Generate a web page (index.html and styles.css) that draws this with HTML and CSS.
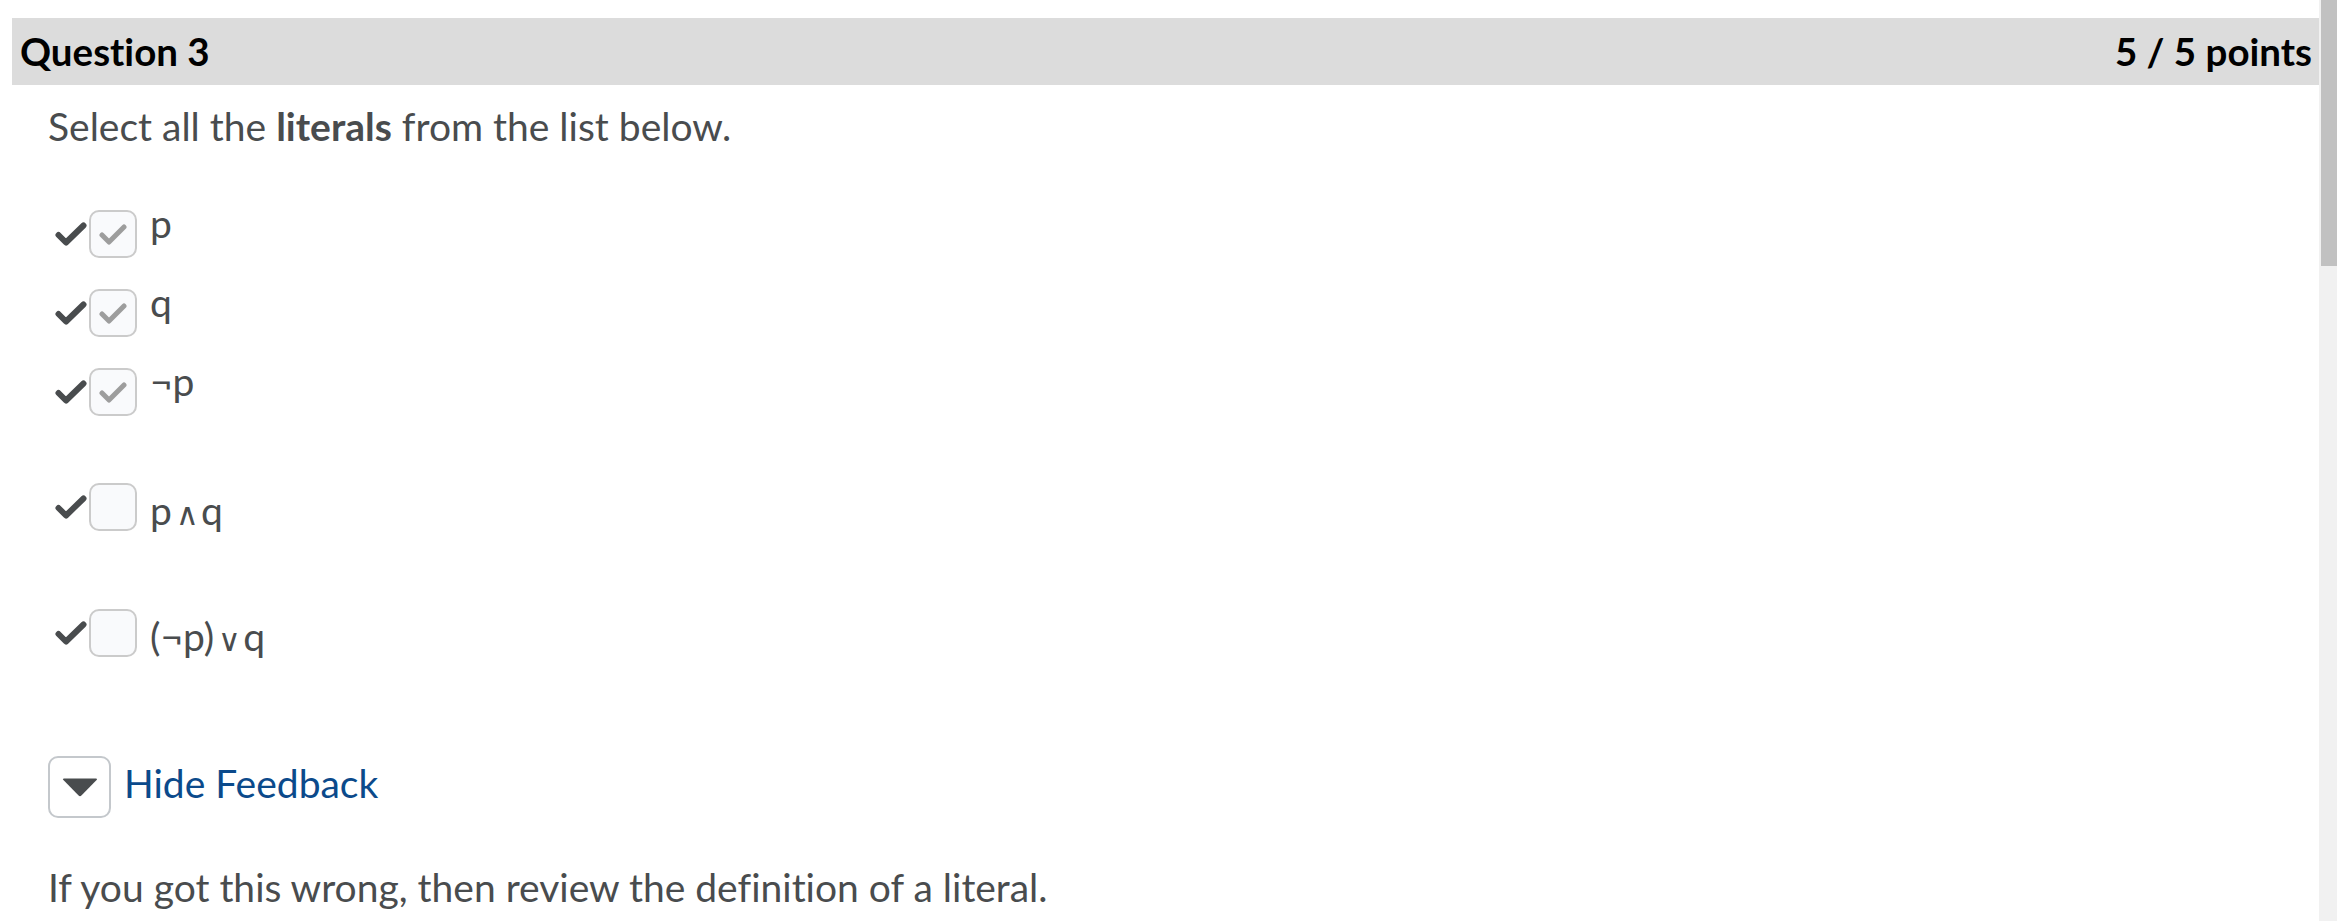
FILE: index.html
```html
<!DOCTYPE html>
<html lang="en">
<head>
<meta charset="utf-8">
<title>Question 3</title>
<link rel="stylesheet" href="styles.css">
</head>
<body>
<div class="page">
  <main class="main">
    <div class="q-header">
      <h2 class="q-title">Question 3</h2>
      <div class="q-points">5 / 5 points</div>
    </div>
    <div class="q-body">
      <p class="prompt">Select all the <strong>literals</strong> from the list below.</p>
      <ul class="options">
        <li class="option">
          <div class="marks">
            <svg class="correct" width="32" height="24" viewBox="0 0 32 24"><polyline points="3.5,13 11,20.5 28.5,3.5" fill="none" stroke="#494c4e" stroke-width="6" stroke-linecap="round" stroke-linejoin="round"/></svg>
            <span class="box"><svg width="28" height="21" viewBox="0 0 28 21"><polyline points="3,11 10,18 25,3" fill="none" stroke="#9d9d9d" stroke-width="5" stroke-linecap="round" stroke-linejoin="round"/></svg></span>
          </div>
          <span class="label">p</span>
        </li>
        <li class="option">
          <div class="marks">
            <svg class="correct" width="32" height="24" viewBox="0 0 32 24"><polyline points="3.5,13 11,20.5 28.5,3.5" fill="none" stroke="#494c4e" stroke-width="6" stroke-linecap="round" stroke-linejoin="round"/></svg>
            <span class="box"><svg width="28" height="21" viewBox="0 0 28 21"><polyline points="3,11 10,18 25,3" fill="none" stroke="#9d9d9d" stroke-width="5" stroke-linecap="round" stroke-linejoin="round"/></svg></span>
          </div>
          <span class="label">q</span>
        </li>
        <li class="option">
          <div class="marks">
            <svg class="correct" width="32" height="24" viewBox="0 0 32 24"><polyline points="3.5,13 11,20.5 28.5,3.5" fill="none" stroke="#494c4e" stroke-width="6" stroke-linecap="round" stroke-linejoin="round"/></svg>
            <span class="box"><svg width="28" height="21" viewBox="0 0 28 21"><polyline points="3,11 10,18 25,3" fill="none" stroke="#9d9d9d" stroke-width="5" stroke-linecap="round" stroke-linejoin="round"/></svg></span>
          </div>
          <span class="label">¬p</span>
        </li>
        <li class="option math">
          <div class="marks">
            <svg class="correct" width="32" height="24" viewBox="0 0 32 24"><polyline points="3.5,13 11,20.5 28.5,3.5" fill="none" stroke="#494c4e" stroke-width="6" stroke-linecap="round" stroke-linejoin="round"/></svg>
            <span class="box"></span>
          </div>
          <span class="label">p<span class="op">∧</span>q</span>
        </li>
        <li class="option math">
          <div class="marks">
            <svg class="correct" width="32" height="24" viewBox="0 0 32 24"><polyline points="3.5,13 11,20.5 28.5,3.5" fill="none" stroke="#494c4e" stroke-width="6" stroke-linecap="round" stroke-linejoin="round"/></svg>
            <span class="box"></span>
          </div>
          <span class="label">(¬p)<span class="op">∨</span>q</span>
        </li>
      </ul>
      <div class="feedback-toggle">
        <button class="toggle-btn" type="button" aria-label="Hide Feedback">
          <svg width="38" height="22" viewBox="0 0 38 22"><path d="M3 2.5 L35 2.5 Q37 2.5 35.6 4 L20.4 19.6 Q19 21 17.6 19.6 L2.4 4 Q1 2.5 3 2.5 Z" fill="#494c4e"/></svg>
        </button>
        <a class="toggle-link" href="#">Hide Feedback</a>
      </div>
      <p class="feedback">If you got this wrong, then review the definition of a literal.</p>
    </div>
  </main>
  <div class="scrollbar"><div class="thumb"></div></div>
</div>
</body>
</html>
```
FILE: styles.css
```css
html, body {
  margin: 0;
  padding: 0;
  background: #ffffff;
}

body {
  font-family: Lato, "Open Sans", sans-serif;
  color: #494c4e;
  font-variant-ligatures: none;
}

.page {
  display: flex;
  height: 921px;
  overflow: hidden;
}

.main {
  flex: 1;
  padding: 18px 0 0 12px;
  min-width: 0;
}

.q-header {
  height: 67px;
  background: #dcdcdc;
  display: flex;
  align-items: center;
  justify-content: space-between;
  padding: 0 7px 0 8px;
}

.q-title,
.q-points {
  margin: 0;
  font-size: 38.5px;
  font-weight: 700;
  color: #000000;
  line-height: 1.2;
}

.q-body {
  padding-left: 36px;
  font-size: 39px;
}

.prompt {
  margin: 18px 0 0 0;
  line-height: 47px;
}

.prompt strong {
  font-weight: 700;
}

.options {
  list-style: none;
  margin: 45px 0 0 0;
  padding: 0;
}

.option {
  display: flex;
  align-items: flex-start;
  margin-bottom: 16px;
}

.option.math {
  padding-top: 36px;
  padding-bottom: 8px;
}

.marks {
  display: flex;
  align-items: center;
  margin-top: 15px;
  padding-left: 7px;
}

.correct {
  display: block;
  margin-right: 2px;
}

.box {
  width: 44px;
  height: 44px;
  border: 2px solid #cbcbcb;
  border-radius: 10px;
  background: #f9fafc;
  display: flex;
  align-items: center;
  justify-content: center;
}

.box svg {
  display: block;
}

.label {
  line-height: 47px;
  margin-left: 13px;
  padding-top: 5px;
}

.option.math .label {
  padding-top: 19px;
}

.op {
  font-family: "DejaVu Sans ExtraLight", "DejaVu Sans Light", "DejaVu Sans", sans-serif;
  font-size: 31px;
  font-weight: 200;
  line-height: 1;
  margin: 0 2px 0 4px;
}

.feedback-toggle {
  display: flex;
  align-items: flex-start;
  margin-top: 88px;
}

.toggle-btn {
  width: 63px;
  height: 62px;
  border: 2px solid #c4c8cc;
  border-radius: 10px;
  background: #ffffff;
  padding: 0;
  display: flex;
  align-items: center;
  justify-content: center;
}

.toggle-btn svg {
  display: block;
}

.toggle-link {
  margin: 4px 0 0 13px;
  line-height: 47px;
  color: #0b4a8b;
  text-decoration: none;
}

.feedback {
  margin: 46px 0 0 0;
  line-height: 47px;
}

.scrollbar {
  width: 18px;
  flex: none;
  background: #f1f1f1;
}

.thumb {
  margin-left: 2px;
  height: 266px;
  background: #c1c1c1;
}
```
